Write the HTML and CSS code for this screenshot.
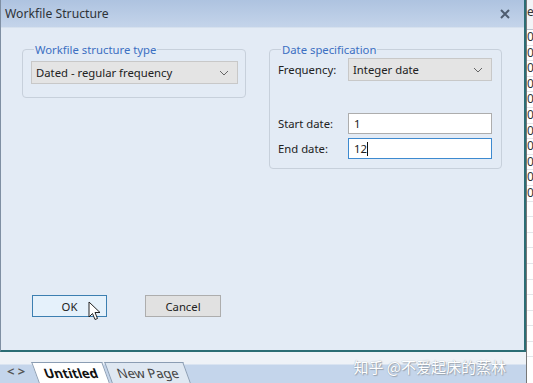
FILE: index.html
```html
<!DOCTYPE html>
<html lang="en">
<head>
  <meta charset="UTF-8" />
  <title>Workfile Structure</title>
  <meta name="viewport" content="width=device-width, initial-scale=1.0" />
  <link rel="stylesheet" href="styles.css">
</head>
<body>
  <div class="app">
    <div class="dialog">
      <div class="titlebar">
        <span class="title">Workfile Structure</span>
        <svg class="close" width="10" height="10" viewBox="0 0 10 10"><path d="M1 1 L9 9 M9 1 L1 9" stroke="#4f5d70" stroke-width="2"/></svg>
      </div>
      <div class="dialog-body">
        <div class="groups">
          <fieldset class="group group-type">
            <legend>Workfile structure type</legend>
            <div class="combo combo-type">
              <span>Dated - regular frequency</span>
              <svg class="chevron" width="10" height="6" viewBox="0 0 10 6"><path d="M1 1 L5 5 L9 1" fill="none" stroke="#666" stroke-width="1"/></svg>
            </div>
          </fieldset>

          <fieldset class="group group-date">
            <legend>Date specification</legend>
            <div class="row">
              <label>Frequency:</label>
              <div class="combo combo-freq">
                <span>Integer date</span>
                <svg class="chevron" width="10" height="6" viewBox="0 0 10 6"><path d="M1 1 L5 5 L9 1" fill="none" stroke="#666" stroke-width="1"/></svg>
              </div>
            </div>
            <div class="row row-start">
              <label>Start date:</label>
              <div class="field">1</div>
            </div>
            <div class="row row-end">
              <label>End date:</label>
              <div class="field field-focus">12<span class="caret"></span></div>
            </div>
          </fieldset>
        </div>

        <div class="buttons">
          <div class="btn btn-ok">
            OK
            <svg class="pointer" width="13" height="20" viewBox="0 0 13 20">
              <path d="M1 1 L1 16 L4.5 12.5 L7 18.5 L9.5 17.5 L7 11.5 L12 11.5 Z" fill="#fff" stroke="#222" stroke-width="1" stroke-linejoin="round"/>
            </svg>
          </div>
          <div class="btn btn-cancel">Cancel</div>
        </div>
      </div>
    </div>

    <div class="sheet">
      <div class="sheet-head">e</div>
      <div class="cell">0</div>
      <div class="cell">0</div>
      <div class="cell">0</div>
      <div class="cell">0</div>
      <div class="cell">0</div>
      <div class="cell">0</div>
      <div class="cell">0</div>
      <div class="cell">0</div>
      <div class="cell">0</div>
      <div class="cell">0</div>
      <div class="cell">0</div>
      <div class="cell"></div>
      <div class="cell"></div>
      <div class="cell"></div>
      <div class="cell"></div>
      <div class="cell"></div>
      <div class="cell"></div>
      <div class="cell"></div>
      <div class="cell"></div>
      <div class="cell"></div>
      <div class="cell"></div>
    </div>

    <div class="tabbar">
      <div class="tabs">
        <span class="nav">&lt; &gt;</span>
        <span class="tab tab-active">Untitled</span>
        <span class="tab">New Page</span>
      </div>
      <div class="watermark">知乎 @不爱起床的蒸林</div>
    </div>
  </div>
</body>
</html>
```

FILE: styles.css
```css
body {
  margin: 0;
  background: #fff;
  font-family: 'Noto Sans', 'Segoe UI', sans-serif;
  font-size: 11.3px;
  color: #222;
}
.app {
  display: grid;
  grid-template-columns: 526px 7px;
  grid-template-rows: 352px 31px;
  width: 533px;
  height: 383px;
  overflow: hidden;
}
.dialog {
  display: flex;
  flex-direction: column;
  background: #e3ebf5;
  border-left: 1px solid #7f8fa3;
  border-right: 2px solid #2b6d74;
  border-bottom: 2px solid #2b6d74;
  box-sizing: border-box;
}
.titlebar {
  height: 27px;
  display: flex;
  align-items: center;
  justify-content: space-between;
  padding: 0 14px 0 4px;
  background: linear-gradient(to bottom, #aec3e0, #c4d4ea);
  border-bottom: 1px solid #d6e1ee;
}
.title {
  font-size: 12.2px;
  color: #2e3338;
}
.dialog-body {
  flex: 1;
  padding: 14px 0 0 21px;
}
.groups {
  display: flex;
  align-items: flex-start;
  gap: 23px;
}
.group {
  margin: 0;
  border: 1px solid #c7d0db;
  border-radius: 4px;
  box-sizing: border-box;
}
.group legend {
  color: #3c6fc2;
  padding: 0 1px;
  margin-left: 3px;
  font-size: 11.3px;
}
.group-type {
  width: 224px;
  height: 56px;
  padding: 4px 6px 0 8px;
}
.group-date {
  width: 233px;
  height: 127px;
  padding: 1px 8px 0 8px;
}
.combo {
  display: flex;
  align-items: center;
  justify-content: space-between;
  height: 23px;
  box-sizing: border-box;
  padding: 0 8px 0 4px;
  background: #e4e4e4;
  border: 1px solid #c8c8c8;
  color: #222;
}
.combo-type {
  width: 207px;
}
.combo-freq {
  width: 144px;
}
.row {
  display: flex;
  align-items: center;
}
.row label {
  width: 70px;
}
.row-start {
  margin-top: 32px;
}
.row-end {
  margin-top: 4px;
}
.field {
  width: 144px;
  height: 21px;
  box-sizing: border-box;
  display: flex;
  align-items: center;
  padding-left: 5px;
  background: #fff;
  border: 1px solid #adadad;
}
.field-focus {
  border-color: #3d8ad0;
}
.caret {
  width: 1px;
  height: 14px;
  background: #111;
}
.buttons {
  display: flex;
  gap: 38px;
  margin-top: 126px;
  padding-left: 10px;
}
.btn {
  position: relative;
  width: 75px;
  height: 22px;
  box-sizing: border-box;
  display: flex;
  align-items: center;
  justify-content: center;
}
.btn-ok {
  background: #e5f1fb;
  border: 1px solid #3c7fb1;
}
.btn-cancel {
  width: 76px;
  background: #e1e1e1;
  border: 1px solid #adadad;
}
.pointer {
  position: absolute;
  left: 55px;
  top: 5px;
}
.sheet {
  grid-row: 1 / 3;
  grid-column: 2;
  background: #fff;
  border-left: 1px solid #777;
  overflow: hidden;
  font-size: 12px;
  color: #333;
}
.sheet-head {
  height: 30px;
  box-sizing: border-box;
  padding-top: 4px;
  line-height: 16px;
  background: #f2f4f7;
  border-bottom: 1px solid #b9c3cf;
}
.cell {
  height: 15.6px;
  line-height: 14px;
  border-bottom: 1px solid #e3e6ea;
  box-sizing: border-box;
  overflow: hidden;
}
.tabbar {
  position: relative;
  display: flex;
  flex-direction: column;
  justify-content: flex-end;
  background: linear-gradient(to bottom, #eef2f7 0, #eef2f7 12px, #c4d5eb 13px);
  padding-right: 8px;
}
.tabs {
  display: flex;
  align-items: flex-end;
  height: 21px;
  padding-left: 7px;
}
.nav {
  font-size: 13px;
  font-weight: bold;
  color: #555;
  margin-right: 10px;
  padding-bottom: 3px;
}
.tab {
  height: 20px;
  padding: 0 8px;
  display: flex;
  align-items: center;
  font-size: 13px;
  color: #444;
  background: #dfe8f2;
  border: 1px solid #8b9db3;
  border-bottom: none;
  transform: skewX(20deg);
}
.tab-active {
  font-weight: bold;
  color: #111;
  background: #fff;
  margin-right: 1px;
}
.watermark {
  position: absolute;
  right: 20px;
  top: 4px;
  font-family: 'Noto Sans CJK SC', sans-serif;
  font-size: 15px;
  color: #fff;
  text-shadow: 0 0 1px #8d98a6, 1px 1px 1px #9aa4b0;
}
```
